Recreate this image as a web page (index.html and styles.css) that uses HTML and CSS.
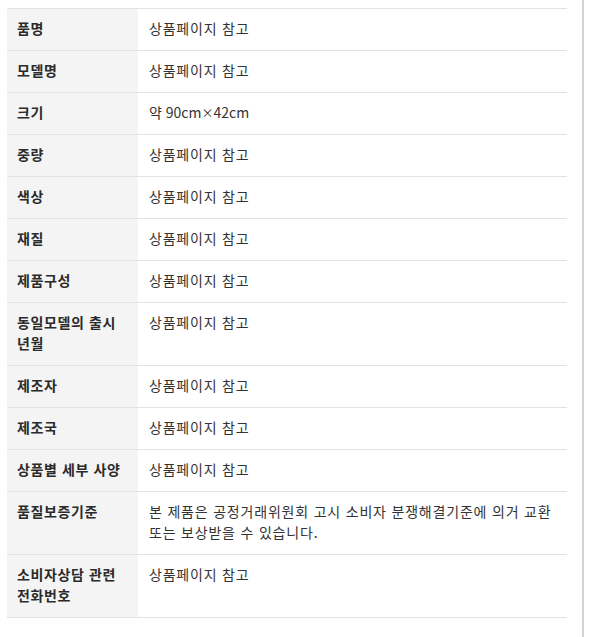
FILE: index.html
```html
<!DOCTYPE html>
<html lang="ko">
<head>
<meta charset="utf-8">
<link rel="stylesheet" href="styles.css">
</head>
<body>
<div class="wrap">
<table class="spec">
<tbody>
<tr><th>품명</th><td>상품페이지 참고</td></tr>
<tr><th>모델명</th><td>상품페이지 참고</td></tr>
<tr><th>크기</th><td class="size">약 90cm<span class="x">×</span>42cm</td></tr>
<tr><th>중량</th><td>상품페이지 참고</td></tr>
<tr><th>색상</th><td>상품페이지 참고</td></tr>
<tr><th>재질</th><td>상품페이지 참고</td></tr>
<tr><th>제품구성</th><td>상품페이지 참고</td></tr>
<tr><th>동일모델의 출시<br>년월</th><td>상품페이지 참고</td></tr>
<tr><th>제조자</th><td>상품페이지 참고</td></tr>
<tr><th>제조국</th><td>상품페이지 참고</td></tr>
<tr><th>상품별 세부 사양</th><td>상품페이지 참고</td></tr>
<tr><th>품질보증기준</th><td>본 제품은 공정거래위원회 고시 소비자 분쟁해결기준에 의거 교환<br>또는 보상받을 수 있습니다.</td></tr>
<tr><th>소비자상담 관련<br>전화번호</th><td>상품페이지 참고</td></tr>
</tbody>
</table>
</div>
</body>
</html>
```
FILE: styles.css
```css
html, body {
  margin: 0;
  padding: 0;
  background: #fff;
}
body {
  font-family: "Noto Sans CJK KR", "Noto Sans", sans-serif;
  font-size: 14px;
  color: #333;
}
.wrap {
  box-sizing: border-box;
  width: 584px;
  height: 637px;
  padding: 8px 17px 0 7px;
  border-right: 2px solid #d4d4d4;
}
.spec {
  width: 560px;
  border-collapse: collapse;
  border-top: 1px solid #e2e2e2;
}
.spec th, .spec td {
  border-bottom: 1px solid #e2e2e2;
  line-height: 21px;
  padding: 9px 10px 11px 10px;
  text-align: left;
  vertical-align: top;
}
.spec th {
  width: 111px;
  background: #f4f4f4;
  font-weight: bold;
  letter-spacing: 0.6px;
  color: #2b2b2b;
}
.spec td {
  padding-left: 11px;
  padding-right: 0;
  font-weight: normal;
  letter-spacing: 0.8px;
  color: #333;
}
.spec td.size {
  letter-spacing: 0;
}
.spec .x {
  font-size: 12px;
}
```
